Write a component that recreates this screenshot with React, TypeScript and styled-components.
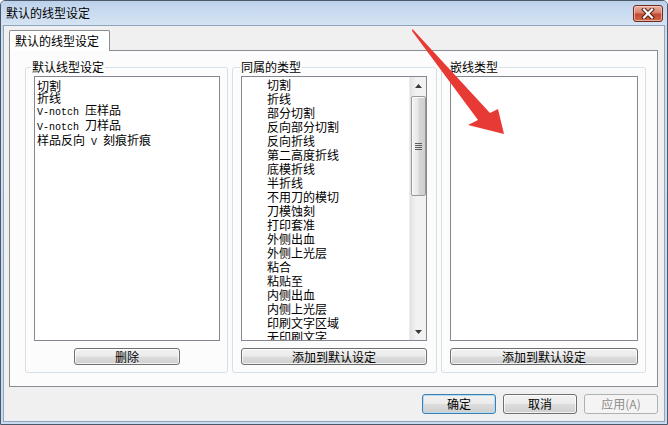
import React from 'react';
import styled, { createGlobalStyle } from 'styled-components';

const Global = createGlobalStyle`
  html, body { margin: 0; padding: 0; background: #ffffff; }
  body { font-family: "Noto Sans CJK SC", "Liberation Sans", sans-serif; font-size: 12px; color: #000; }
  * { box-sizing: border-box; }
`;

const Window = styled.div`
  position: relative;
  width: 668px;
  height: 425px;
  border: 1px solid #4a5868;
  border-radius: 5px 5px 0 0;
  background: linear-gradient(#c2d5ec, #cfdff1 40px, #c8dbf0);
  display: flex;
  flex-direction: column;
  overflow: hidden;
`;

const TitleBar = styled.div`
  height: 24px;
  flex: none;
  display: flex;
  align-items: flex-start;
  justify-content: space-between;
  padding-left: 5px;
  background: linear-gradient(#bcd1ea 0%, #c9dbf0 45%, #d5e3f3 100%);
`;

const Title = styled.span`
  margin-top: 4px;
  font-size: 12px;
  line-height: 16px;
  color: #000;
`;

const CloseButton = styled.div`
  margin-top: 4px;
  margin-right: 4px;
  width: 30px;
  height: 17px;
  border: 1px solid #6e2a1e;
  border-radius: 3px;
  background: linear-gradient(#eab09f 0%, #d9826b 45%, #c34a30 55%, #d0674c 100%);
  box-shadow: inset 0 0 0 1px rgba(255, 220, 210, 0.6);
  display: flex;
  align-items: center;
  justify-content: center;
`;

const Client = styled.div`
  flex: 1;
  margin: 0 2px 2px 2px;
  border: 1px solid #8fa4bd;
  background: #f0f0f0;
  padding: 4px 6px 0 5px;
  display: flex;
  flex-direction: column;
`;

const TabStrip = styled.div`
  display: flex;
  height: 20px;
  position: relative;
  z-index: 1;
`;

const Tab = styled.div`
  width: 101px;
  height: 21px;
  border: 1px solid #898c95;
  border-bottom: none;
  border-radius: 2px 2px 0 0;
  background: #ffffff;
  padding: 3px 0 0 5px;
  line-height: 14px;
  font-size: 12px;
`;

const TabPanel = styled.div`
  height: 337px;
  flex: none;
  border: 1px solid #898c95;
  background: #fcfcfc;
  padding: 9px 11px 13px 15px;
  display: grid;
  grid-template-columns: 203px 205px 205px;
  grid-template-rows: 313px;
  column-gap: 4px;
`;

const Group = styled.fieldset`
  margin: 0;
  min-width: 0;
  height: 313px;
  border: 1px solid #d5dfe5;
  border-radius: 3px;
  padding: 2px 7px 6px 8px;
  display: flex;
  flex-direction: column;
  box-shadow: inset 1px 1px 0 #ffffff;
`;

const Legend = styled.legend<{ $shift: number }>`
  font-size: 12px;
  line-height: 14px;
  height: 14px;
  padding: 0 1px;
  margin-left: ${p => p.$shift}px;
`;

const ListBox = styled.div<{ $gap: number }>`
  flex: none;
  height: 265px;
  border: 1px solid #828790;
  background: #ffffff;
  display: flex;
  overflow: hidden;
  margin-right: ${p => p.$gap}px;
`;

const Items = styled.div<{ $lh: number; $indent: number; $top: number }>`
  flex: 1;
  padding: ${p => p.$top}px 0 0 ${p => p.$indent}px;
  font-size: 12px;
  line-height: ${p => p.$lh}px;
  white-space: nowrap;
  overflow: hidden;
`;

const Item = styled.div``;

const Mono = styled.span`
  font-family: "Liberation Mono", monospace;
  font-size: 10px;
  white-space: pre;
`;

const ScrollBar = styled.div`
  width: 17px;
  flex: none;
  display: flex;
  flex-direction: column;
  background: linear-gradient(90deg, #e2e2e2, #f2f2f2 40%, #f2f2f2);
  border-left: 1px solid #ededed;
`;

const Arrow = styled.div`
  height: 17px;
  flex: none;
  display: flex;
  align-items: center;
  justify-content: center;
`;

const Track = styled.div`
  flex: 1;
  padding: 2px 0 0 1px;
`;

const Thumb = styled.div`
  width: 15px;
  height: 100px;
  border: 1px solid #999999;
  border-radius: 2px;
  background: linear-gradient(90deg, #f3f3f3 0%, #e8e8e8 45%, #d6d6d6 55%, #cfcfcf 100%);
  box-shadow: inset 1px 1px 0 #fbfbfb;
  display: flex;
  align-items: center;
  justify-content: center;
`;

const Grip = styled.div`
  width: 7px;
  height: 7px;
  background: repeating-linear-gradient(#5b5b5b 0 1px, transparent 1px 2px);
`;

const ListButton = styled.div<{ $width?: number; $mr: number }>`
  flex: none;
  height: 17px;
  margin-top: 7px;
  margin-right: ${p => p.$mr}px;
  ${p => (p.$width ? `width: ${p.$width}px; align-self: center;` : '')}
  border: 1px solid #707070;
  border-radius: 3px;
  background: linear-gradient(#f2f2f2 0%, #ebebeb 49%, #dddddd 51%, #cfcfcf 100%);
  box-shadow: inset 0 0 0 1px rgba(255, 255, 255, 0.7);
  font-size: 12px;
  line-height: 15px;
  text-align: center;
  color: #000;
`;

const Footer = styled.div`
  display: flex;
  justify-content: flex-end;
  gap: 7px;
  margin-top: 7px;
`;

const DialogButton = styled.div<{ $variant?: 'default' | 'disabled' }>`
  width: 74px;
  height: 20px;
  border-radius: 3px;
  font-size: 12px;
  line-height: 18px;
  text-align: center;
  border: 1px solid ${p => (p.$variant === 'default' ? '#3c7fb1' : p.$variant === 'disabled' ? '#adb2b5' : '#707070')};
  color: ${p => (p.$variant === 'disabled' ? '#8d8d8d' : '#000')};
  background: ${p =>
    p.$variant === 'disabled'
      ? '#f4f4f4'
      : 'linear-gradient(#f2f2f2 0%, #ebebeb 49%, #dddddd 51%, #cfcfcf 100%)'};
  box-shadow: ${p =>
    p.$variant === 'default'
      ? 'inset 0 0 0 1px #b6dcf3'
      : p.$variant === 'disabled'
      ? 'none'
      : 'inset 0 0 0 1px rgba(255,255,255,0.7)'};
`;

const Overlay = styled.svg`
  position: absolute;
  left: -1px;
  top: -1px;
  width: 668px;
  height: 425px;
  pointer-events: none;
`;

const defaults: React.ReactNode[] = [
  '切割',
  '折线',
  <><Mono>V-notch </Mono>压样品</>,
  <><Mono>V-notch </Mono>刀样品</>,
  <>样品反向<Mono> V </Mono>刻痕折痕</>,
];

const siblings = [
  '切割',
  '折线',
  '部分切割',
  '反向部分切割',
  '反向折线',
  '第二高度折线',
  '底模折线',
  '半折线',
  '不用刀的模切',
  '刀模蚀刻',
  '打印套准',
  '外侧出血',
  '外侧上光层',
  '粘合',
  '粘贴至',
  '内侧出血',
  '内侧上光层',
  '印刷文字区域',
  '无印刷文字',
];

export default function App() {
  return (
    <>
      <Global />
      <Window>
        <TitleBar>
          <Title>默认的线型设定</Title>
          <CloseButton>
            <svg width="14" height="11" viewBox="0 0 14 11">
              <path d="M3 1.5 L11 9.5 M11 1.5 L3 9.5" stroke="#4a1a12" strokeWidth="4" strokeLinecap="square" />
              <path d="M3 1.5 L11 9.5 M11 1.5 L3 9.5" stroke="#ffffff" strokeWidth="2.2" strokeLinecap="square" />
            </svg>
          </CloseButton>
        </TitleBar>
        <Client>
          <TabStrip>
            <Tab>默认的线型设定</Tab>
          </TabStrip>
          <TabPanel>
            <Group>
              <Legend $shift={-3}>默认线型设定</Legend>
              <ListBox $gap={0}>
                <Items $lh={12} $indent={2} $top={3}>
                  {defaults.map((d, i) => (
                    <Item key={i}>{d}</Item>
                  ))}
                </Items>
              </ListBox>
              <ListButton $width={106} $mr={0}>删除</ListButton>
            </Group>
            <Group>
              <Legend $shift={-1}>同属的类型</Legend>
              <ListBox $gap={2}>
                <Items $lh={14} $indent={25} $top={1}>
                  {siblings.map(s => (
                    <Item key={s}>{s}</Item>
                  ))}
                </Items>
                <ScrollBar>
                  <Arrow>
                    <svg width="7" height="4" viewBox="0 0 7 4">
                      <path d="M0 4 L3.5 0 L7 4 Z" fill="#3a3a3a" />
                    </svg>
                  </Arrow>
                  <Track>
                    <Thumb>
                      <Grip />
                    </Thumb>
                  </Track>
                  <Arrow>
                    <svg width="7" height="4" viewBox="0 0 7 4">
                      <path d="M0 0 L7 0 L3.5 4 Z" fill="#3a3a3a" />
                    </svg>
                  </Arrow>
                </ScrollBar>
              </ListBox>
              <ListButton $mr={2}>添加到默认设定</ListButton>
            </Group>
            <Group>
              <Legend $shift={-1}>嵌线类型</Legend>
              <ListBox $gap={0}>
                <Items $lh={12} $indent={2} $top={2} />
              </ListBox>
              <ListButton $mr={0}>添加到默认设定</ListButton>
            </Group>
          </TabPanel>
          <Footer>
            <DialogButton $variant="default">确定</DialogButton>
            <DialogButton>取消</DialogButton>
            <DialogButton $variant="disabled">应用(A)</DialogButton>
          </Footer>
        </Client>
        <Overlay viewBox="0 0 668 425">
          <polygon
            points="412.5,29 490,113 498,109 504,134 468,125 478,120 412,31"
            fill="#e83a34"
          />
        </Overlay>
      </Window>
    </>
  );
}
